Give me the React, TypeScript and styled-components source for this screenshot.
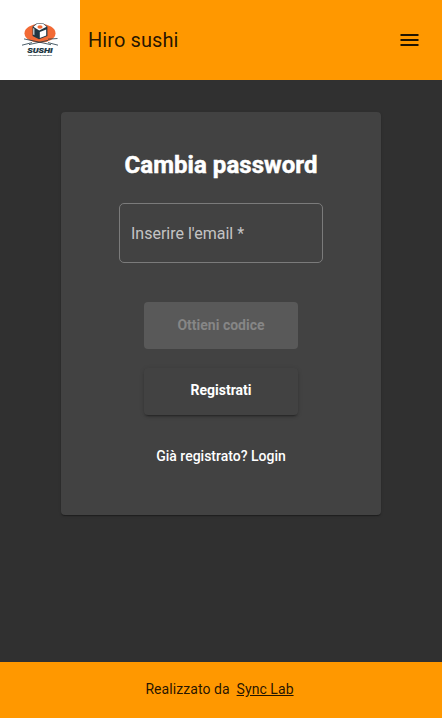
import React from 'react';
import styled, { createGlobalStyle } from 'styled-components';

const GlobalStyle = createGlobalStyle`
  * { box-sizing: border-box; }
  html, body, #root { height: 100%; }
  body {
    margin: 0;
    background: #303030;
    font-family: Roboto, "Liberation Sans", sans-serif;
    overflow: hidden;
  }
`;

const Page = styled.div`
  display: flex;
  flex-direction: column;
  height: 100vh;
`;

const Toolbar = styled.header`
  display: flex;
  align-items: center;
  flex: none;
  height: 80px;
  background: #ff9800;
  color: rgba(0, 0, 0, 0.87);
`;

const LogoBox = styled.div`
  width: 80px;
  height: 80px;
  background: #fff;
`;

const Brand = styled.span`
  margin-left: 8px;
  font-size: 20px;
  line-height: 32px;
  font-weight: 400;
  letter-spacing: 0.08px;
`;

const MenuButton = styled.button`
  display: flex;
  align-items: center;
  justify-content: center;
  width: 40px;
  height: 40px;
  margin: 0 12px 0 auto;
  padding: 0;
  border: 0;
  background: transparent;
  color: rgba(0, 0, 0, 0.87);
`;

const Main = styled.main`
  flex: 1;
  display: flex;
  justify-content: center;
  align-items: flex-start;
  padding-top: 32px;
`;

const Card = styled.form`
  display: flex;
  flex-direction: column;
  align-items: center;
  width: 320px;
  height: 403px;
  padding-top: 37px;
  border-radius: 4px;
  background: #424242;
  color: #fff;
  box-shadow: 0 2px 1px -1px rgba(0, 0, 0, 0.2), 0 1px 1px 0 rgba(0, 0, 0, 0.14),
    0 1px 3px 0 rgba(0, 0, 0, 0.12);
`;

const Title = styled.h1`
  margin: 0;
  font-size: 24px;
  line-height: 32px;
  font-weight: 700;
  letter-spacing: 0.05px;
  -webkit-text-stroke: 0.5px #fff;
`;

const Field = styled.label`
  display: flex;
  align-items: center;
  width: 204px;
  height: 60px;
  margin-top: 22px;
  padding: 2px 0 0 11px;
  border: 1px solid #7b7b7b;
  border-radius: 5px;
  color: rgba(255, 255, 255, 0.7);
  font-size: 16px;
  line-height: 18px;
`;

const Button = styled.button<{ $gap: number; $lift: number }>`
  width: 154px;
  height: 47px;
  margin-top: ${(p) => p.$gap}px;
  padding: 0 0 ${(p) => p.$lift}px;
  border: 0;
  border-radius: 4px;
  background: #424242;
  color: #fff;
  font: 700 14px/36px Roboto, sans-serif;
  box-shadow: 0 3px 1px -2px rgba(0, 0, 0, 0.2), 0 2px 2px 0 rgba(0, 0, 0, 0.14),
    0 1px 5px 0 rgba(0, 0, 0, 0.12);

  &:disabled {
    background: #595959;
    color: #868686;
    box-shadow: none;
  }
`;

const LoginLink = styled.a`
  margin-top: 31px;
  font-size: 14px;
  line-height: 20px;
  font-weight: 500;
  color: #fff;
`;

const Footer = styled.footer`
  display: flex;
  align-items: center;
  justify-content: center;
  gap: 7px;
  flex: none;
  height: 56px;
  padding: 0 3px 2px 0;
  background: #ff9800;
  color: rgba(0, 0, 0, 0.87);
  font-size: 14px;
  letter-spacing: 0.06px;

  a {
    color: inherit;
    text-decoration: underline;
  }
`;

const Logo = () => (
  <svg width="80" height="80" viewBox="0 0 80 80" aria-label="Sushi">
    <ellipse cx="40" cy="33.3" rx="15.5" ry="9.5" fill="#f26a35" />
    <path d="M32.6 26.6 36.5 23.4h7l3.9 3.2V36L39 39.3 32.6 36z" fill="#203642" />
    <path d="M33.4 26.8 36.8 23.9h6.6l3.2 2.9-7.4 3.6z" fill="#fff" />
    <ellipse cx="40" cy="27" rx="2.6" ry="1.8" fill="#f26a35" />
    <path d="m33.2 28 1.2.8v6.4l-1.2-.6z" fill="#dfe5e7" />
    <path d="M39.8 32 46.2 29.4v6L39.8 38z" fill="#fff" />
    <path
      d="m24 38.9 16 3.4 11 2.4M57.5 38.5 48 39.2M48 40.4 29 44.6M22 45.2l10-2.6M58 45.2l-10-2.6"
      fill="none"
      stroke="#203642"
      strokeWidth="0.8"
    />
    <text
      x="27.2"
      y="53.2"
      textLength="25.5"
      lengthAdjust="spacingAndGlyphs"
      fill="#203642"
      stroke="#203642"
      strokeWidth="0.2"
      fontFamily="Roboto, sans-serif"
      fontSize="7.8"
      fontWeight="900"
      fontStyle="italic"
    >
      SUSHI
    </text>
    <text
      x="28"
      y="56"
      textLength="24"
      lengthAdjust="spacingAndGlyphs"
      fill="#203642"
      fontFamily="Roboto, sans-serif"
      fontSize="2.4"
      fontWeight="900"
    >
      THE FRESH &amp; THE BEST
    </text>
  </svg>
);

export default function App() {
  return (
    <>
      <GlobalStyle />
      <Page>
        <Toolbar>
          <LogoBox>
            <Logo />
          </LogoBox>
          <Brand>Hiro sushi</Brand>
          <MenuButton aria-label="Menu">
            <svg width="24" height="24" viewBox="0 0 24 24" fill="currentColor">
              <path d="M2.5 18h18v-2h-18v2zm0-5h18v-2h-18v2zm0-7v2h18V6h-18z" />
            </svg>
          </MenuButton>
        </Toolbar>
        <Main>
          <Card>
            <Title>Cambia password</Title>
            <Field>Inserire l'email *</Field>
            <Button type="button" disabled $gap={39} $lift={2}>
              Ottieni codice
            </Button>
            <Button type="button" $gap={19} $lift={4}>
              Registrati
            </Button>
            <LoginLink>Già registrato? Login</LoginLink>
          </Card>
        </Main>
        <Footer>
          <span>Realizzato da</span>
          <a>Sync Lab</a>
        </Footer>
      </Page>
    </>
  );
}
